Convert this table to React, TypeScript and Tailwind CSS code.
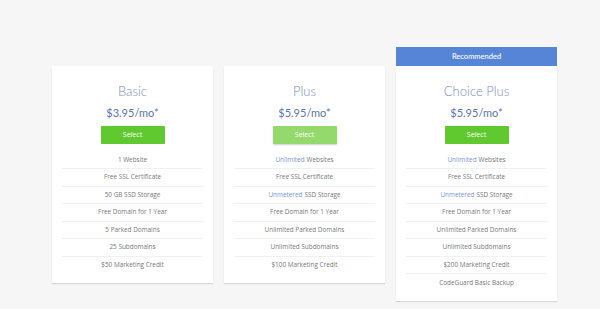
import React from 'react';

type Feature = { hl?: string; text: string };

interface Plan {
  name: string;
  price: string;
  features: Feature[];
  soft?: boolean;
  recommended?: boolean;
}

const plans: Plan[] = [
  {
    name: 'Basic',
    price: '$3.95/mo*',
    features: [
      { text: '1 Website' },
      { text: 'Free SSL Certificate' },
      { text: '50 GB SSD Storage' },
      { text: 'Free Domain for 1 Year' },
      { text: '5 Parked Domains' },
      { text: '25 Subdomains' },
      { text: '$50 Marketing Credit' },
    ],
  },
  {
    name: 'Plus',
    price: '$5.95/mo*',
    soft: true,
    features: [
      { hl: 'Unlimited', text: 'Websites' },
      { text: 'Free SSL Certificate' },
      { hl: 'Unmetered', text: 'SSD Storage' },
      { text: 'Free Domain for 1 Year' },
      { text: 'Unlimited Parked Domains' },
      { text: 'Unlimited Subdomains' },
      { text: '$100 Marketing Credit' },
    ],
  },
  {
    name: 'Choice Plus',
    price: '$5.95/mo*',
    recommended: true,
    features: [
      { hl: 'Unlimited', text: 'Websites' },
      { text: 'Free SSL Certificate' },
      { hl: 'Unmetered', text: 'SSD Storage' },
      { text: 'Free Domain for 1 Year' },
      { text: 'Unlimited Parked Domains' },
      { text: 'Unlimited Subdomains' },
      { text: '$200 Marketing Credit' },
      { text: 'CodeGuard Basic Backup' },
    ],
  },
];

const PlanCard: React.FC<{ plan: Plan }> = ({ plan }) => (
  <div className={`w-[161px] ${plan.recommended ? '' : 'mt-[19px]'}`}>
    {plan.recommended && (
      <div className="h-[19px] bg-[#5684d6] flex items-center justify-center text-white text-[7.5px] font-['Lato',sans-serif] font-medium">
        Recommended
      </div>
    )}
    <div className="bg-white shadow-[0_1px_1px_rgba(0,0,0,0.12)] pt-[17px] pb-[9px] flex flex-col items-center">
      <h3 className="font-['Lato',sans-serif] font-light text-[13px] leading-[16px] text-[#7a8cc0]">{plan.name}</h3>
      <div className="mt-[7px] font-['Lato',sans-serif] text-[11px] leading-[14px] text-[#5a73b2]">{plan.price}</div>
      <button
        className={`mt-[6px] w-[64px] h-[18px] rounded-[1px] text-white text-[7px] font-['Open_Sans',sans-serif] ${
          plan.soft ? 'bg-[#93d96c] shadow-[0_1px_2px_rgba(0,0,0,0.2)]' : 'bg-[#5fc92f]'
        }`}
      >
        Select
      </button>
      <ul className="mt-[7.5px] w-full px-[10px]">
        {plan.features.map((f, i) => (
          <li
            key={i}
            className={`h-[17.5px] flex items-center justify-center gap-[2px] font-['Open_Sans',sans-serif] text-[6.4px] text-[#777] ${
              i < plan.features.length - 1 ? 'border-b border-[#f0f0f0]' : ''
            }`}
          >
            {f.hl && <span className="text-[#7b93d4]">{f.hl}</span>}
            <span>{f.text}</span>
          </li>
        ))}
      </ul>
    </div>
  </div>
);

export default function App() {
  return (
    <div className="min-h-screen bg-[#f6f6f6] pt-[47px] pl-[52px]">
      <div className="flex items-start gap-[11px]">
        {plans.map((p) => (
          <PlanCard key={p.name} plan={p} />
        ))}
      </div>
    </div>
  );
}
